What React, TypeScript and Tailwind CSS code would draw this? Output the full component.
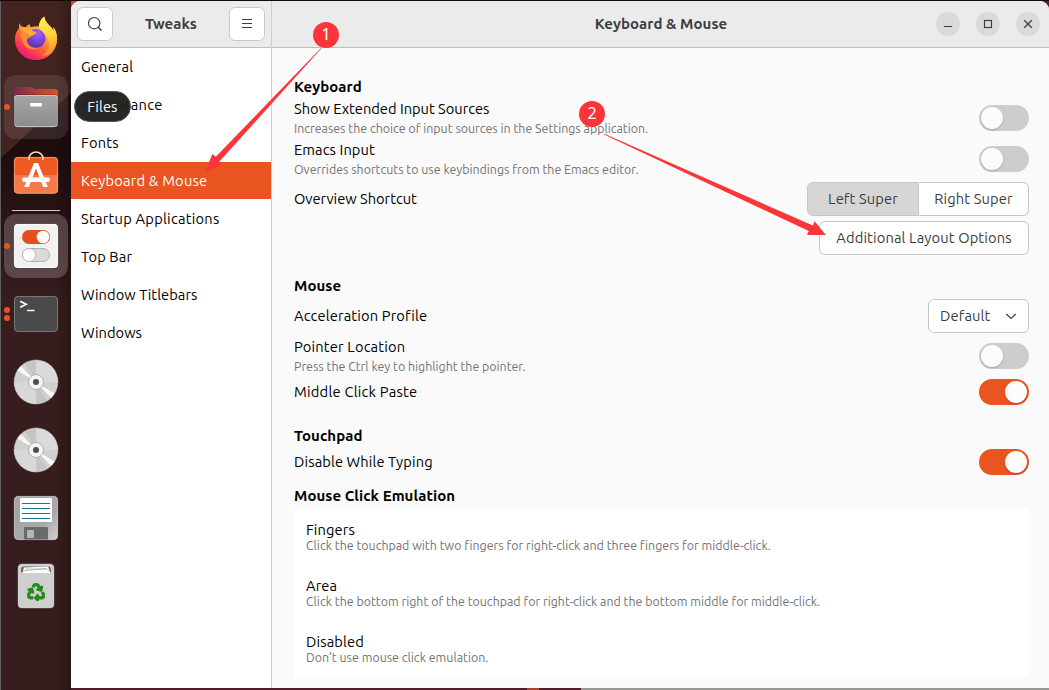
import type { ReactNode } from "react";
import { FaRecycle } from "react-icons/fa";

const TITLE = "text-[14.667px] leading-5 whitespace-nowrap";
const HINT = "text-[12.4px] leading-[18px] whitespace-nowrap text-[#747474]";

function FirefoxIcon() {
  return (
    <svg viewBox="0 0 64 64" className="size-16">
      <defs>
        <linearGradient id="fx-body" x1="0.85" y1="0.05" x2="0.25" y2="1">
          <stop offset="0" stopColor="#fff44f" />
          <stop offset="0.3" stopColor="#ffb932" />
          <stop offset="0.6" stopColor="#ff6a35" />
          <stop offset="0.85" stopColor="#fb2a62" />
          <stop offset="1" stopColor="#e3168c" />
        </linearGradient>
        <linearGradient id="fx-tail" x1="0.4" y1="0" x2="0.6" y2="1">
          <stop offset="0" stopColor="#fff34c" />
          <stop offset="0.5" stopColor="#ffd23c" />
          <stop offset="1" stopColor="#ff8a2b" />
        </linearGradient>
        <radialGradient id="fx-globe" cx="0.6" cy="0.25" r="0.8">
          <stop offset="0" stopColor="#a560ff" />
          <stop offset="0.5" stopColor="#7a45dc" />
          <stop offset="1" stopColor="#4f3298" />
        </radialGradient>
      </defs>
      <path d="M15.500 16c-.6 1.800-.6 3.300-.3 4.700C12 24.500 11 28.500 11 32.500 11.200 44.500 20.500 53 32 53s20.800-8.600 21-20.500c.1-5-1.200-9.500-3.700-12.600.4 1.600.6 3 .5 4.200-1.800-4.800-9-7.500-9.500-14.600-3.500 2.300-5.200 6.500-5.400 9.700-3.400.2-6 .3-8.200 1-.6-.9-1-1.800-1.100-3.200-1.700.8-2.800 1.900-3.600 3.200-1.500-.4-3-.6-4-.4-1-.9-2-2-2.500-3.800z" fill="url(#fx-body)" />
      <path d="M34.900 19.200c.2-3.500 2-7.300 5.400-9.700.5 7.100 8 10 9.500 14.600.1-1.200-.1-2.600-.5-4.200 3.600 4.800 4.700 11.500 2.500 18.300C49.500 45 44 49 38 48.500c6-3.500 8.300-9 6.600-15C42.900 27.500 37 25.500 34.900 19.200z" fill="url(#fx-tail)" />
      <circle cx="32" cy="31.500" r="9.400" fill="url(#fx-globe)" />
      <path d="M16.500 25c3-2.500 8.500-4 11-1.700 1.300 1.300 3 1.500 5 1.700-.3 2.600-4 3-5.300 4.600-1.500 2-4.500 1-4.200 4.400.4 5 6 7.500 10.500 6.800-4.500 3.500-12.500 1-14.500-5.500-1.500-4.500-2.500-7-2.500-10.300z" fill="#ff8a34" />
      <path d="M15.300 20.800c2.500-1 9.100-.8 12.100 2.400 1.300 1.300 3 1.600 5.100 1.800-.6 2.200-4 2.600-6 4.200-3-2.600-7-4.500-11.200-8.400z" fill="#ffae36" />
    </svg>
  );
}

function FilesIcon() {
  return (
    <svg viewBox="0 0 64 64" className="size-16">
      <defs>
        <linearGradient id="fl-back">
          <stop offset="0" stopColor="#7a2a50" />
          <stop offset="1" stopColor="#e2531f" />
        </linearGradient>
        <linearGradient id="fl-front" x2="0" y2="1">
          <stop offset="0" stopColor="#a6a6a6" />
          <stop offset="1" stopColor="#8c8c8c" />
        </linearGradient>
      </defs>
      <path d="M10 15.500a3.500 3.500 0 0 1 3.500-3.500h12.800c2 0 3 .8 4.200 2H50.500a3.500 3.500 0 0 1 3.500 3.500V30H10z" fill="url(#fl-back)" />
      <rect x="9.700" y="19.500" width="44.600" height="33" rx="3.800" fill="#3a1d1d" opacity=".5" />
      <rect x="10" y="20" width="44" height="32" rx="3.500" fill="url(#fl-front)" />
      <path d="M10.500 23.500a3 3 0 0 1 3-3h37a3 3 0 0 1 3 3" fill="none" stroke="#c9c9c9" strokeWidth="1" />
      <path d="M11 50q1 1.700 3 1.700h36q2 0 3-1.700" fill="none" stroke="#dcdcdc" strokeWidth=".8" />
      <rect x="26" y="28" width="12" height="3.400" rx="1" fill="#fff" />
    </svg>
  );
}

function SoftwareIcon() {
  return (
    <svg viewBox="0 0 64 64" className="size-16">
      <rect x="10" y="14" width="44" height="36.500" rx="4" fill="#f05a22" />
      <path d="M10 32h44v14.500a4 4 0 0 1-4 4H14a4 4 0 0 1-4-4z" fill="#f47a4b" />
      <rect x="10.400" y="14.400" width="43.200" height="35.700" rx="3.600" fill="none" stroke="#f8a07b" strokeWidth=".8" />
      <path d="M25 17v-1.500a7 6.500 0 0 1 14 0V17" fill="none" stroke="#f5d9b0" strokeWidth="1.600" />
      <path d="M30 20h4l9.800 24h-4.600L32 25.500 24.800 44h-4.600z" fill="#fff" />
      <rect x="18" y="34.600" width="28" height="4.400" rx="2.200" fill="#fff" />
    </svg>
  );
}

function TweaksIcon() {
  return (
    <svg viewBox="0 0 64 64" className="size-16">
      <rect x="9.700" y="9.700" width="44.600" height="45" rx="4.500" fill="#2a1818" opacity=".5" />
      <rect x="10" y="10" width="44" height="44" rx="4" fill="#f1f1f1" />
      <rect x="10.400" y="10.400" width="43.200" height="43.200" rx="3.600" fill="none" stroke="#fff" strokeWidth=".8" />
      <rect x="18" y="16" width="28" height="14" rx="7" fill="#e24f1c" />
      <circle cx="39" cy="23" r="6.300" fill="#fff" />
      <rect x="18.500" y="34.500" width="27" height="13" rx="6.500" fill="#dadada" stroke="#b2b2b2" />
      <circle cx="25" cy="41" r="6.500" fill="#fff" stroke="#b0b0b0" strokeWidth=".8" />
    </svg>
  );
}

function TerminalIcon() {
  return (
    <svg viewBox="0 0 64 64" className="size-16">
      <rect x="10" y="14" width="44" height="36" rx="4" fill="#4a4a4a" />
      <rect x="10.500" y="14.500" width="43" height="35" rx="3.500" fill="none" stroke="#777" />
      <path d="M16.200 19.300l6 3-6 3" fill="none" stroke="#fff" strokeWidth="1.700" />
      <path d="M23 28.500h7.500" stroke="#fff" strokeWidth="1.500" />
    </svg>
  );
}

function DiscIcon() {
  return (
    <svg viewBox="0 0 64 64" className="size-16">
      <circle cx="32" cy="32" r="22.400" fill="#8b8583" />
      <circle cx="32" cy="32" r="21.800" fill="#d0d0d0" />
      <path d="M32 32V10.200A21.800 21.800 0 0 1 53.800 32z" fill="#dadada" />
      <path d="M32 32L32 10.200A21.800 21.800 0 0 0 21 13.200zM32 32l0 21.800A21.800 21.800 0 0 0 43 50.800z" fill="#c5c5c5" />
      <path d="M32 32H10.200A21.800 21.800 0 0 0 32 53.800z" fill="#d8d8d8" />
      <path d="M32 32L13.500 20.500A21.800 21.800 0 0 1 17 16.200zM32 32l18.500 11.500a21.800 21.800 0 0 1-3.500 4.300z" fill="#faf8f6" />
      <circle cx="32" cy="32" r="7.500" fill="#f5f4f2" stroke="#b3aa93" strokeWidth=".9" />
      <circle cx="32" cy="32" r="3" fill="#4d4d4d" />
    </svg>
  );
}

function FloppyIcon() {
  return (
    <svg viewBox="0 0 64 64" className="size-16">
      <defs>
        <linearGradient id="fd" x2="1" y2="1">
          <stop offset="0" stopColor="#a2a2a2" />
          <stop offset=".65" stopColor="#a9a9a9" />
          <stop offset="1" stopColor="#d2d2d2" />
        </linearGradient>
      </defs>
      <rect x="10" y="10" width="44" height="44" rx="4.500" fill="url(#fd)" />
      <rect x="10.400" y="10.400" width="43.200" height="43.200" rx="4" fill="none" stroke="#bdbdbd" strokeWidth=".8" />
      <rect x="16" y="12" width="32" height="24" rx="1" fill="#fff" />
      <path d="M18 17.500h28M18 22.500h28M18 27.500h28M18 32.500h28" stroke="#1876a5" />
      <path d="M20 53.500V42a1 1 0 0 1 1-1h22a1 1 0 0 1 1 1v11.500z" fill="#6a6a6a" />
      <rect x="23" y="44" width="7" height="8" rx="1" fill="#b4b4b4" />
    </svg>
  );
}

function TrashIcon() {
  return (
    <svg viewBox="0 0 64 64" className="size-16">
      <rect x="13.600" y="9.600" width="36.800" height="45" rx="4.500" fill="#6f6a6a" />
      <rect x="14" y="10" width="36" height="44" rx="4" fill="#cfcfcf" />
      <path d="M17 18.500v-3a3 3 0 0 1 3-3h24a3 3 0 0 1 3 3v3z" fill="#6d6d6d" />
      <path d="M18.500 19l1.500-5.500 24-1 2.500 6.500z" fill="#fff" />
      <path d="M19 17l23-2.500 4 3M21 15h22" fill="none" stroke="#9a9a9a" strokeWidth=".6" />
      <FaRecycle x={23.200} y={29.300} size={17.800} color="#268a1d" strokeWidth={34} />
    </svg>
  );
}

function DockItem({ children, active = "", dots = 0 }: { children: ReactNode; active?: string; dots?: number }) {
  return (
    <div className={`relative size-16 shrink-0 rounded-[12px] ${active}`}>
      {children}
      <div className="absolute top-0 left-0 flex h-full flex-col justify-center gap-[2.500px]">
        {Array.from({ length: dots }, (_, i) => (
          <span key={i} className="size-[6px] rounded-full bg-[#e9541f]" />
        ))}
      </div>
    </div>
  );
}

function Dock() {
  return (
    <nav className="relative flex h-full w-[71px] shrink-0 flex-col items-center gap-1 border-l border-[#606060] bg-[#371d1e] pt-[6px]">
      <svg className="absolute inset-0 h-full w-full" viewBox="0 0 70 689" preserveAspectRatio="none">
        <defs>
          <linearGradient id="dk-top" x2="0" y2="1">
            <stop offset="0" stopColor="#452420" />
            <stop offset="1" stopColor="#41231f" />
          </linearGradient>
          <linearGradient id="dk-mid" x2="0" y2="1">
            <stop offset="0" stopColor="#281112" />
            <stop offset=".3" stopColor="#1e0c0e" />
            <stop offset="1" stopColor="#371d1e" />
          </linearGradient>
          <linearGradient id="dk-edge">
            <stop offset=".75" stopColor="#000" stopOpacity="0" />
            <stop offset="1" stopColor="#000" stopOpacity=".22" />
          </linearGradient>
        </defs>
        <rect y="80" width="70" height="220" fill="url(#dk-mid)" />
        <path d="M0 0h70v92L0 157z" fill="url(#dk-top)" />
        <rect width="70" height="689" fill="url(#dk-edge)" />
      </svg>
      <DockItem><FirefoxIcon /></DockItem>
      <DockItem active="bg-white/10" dots={1}><FilesIcon /></DockItem>
      <DockItem><SoftwareIcon /></DockItem>
      <div className="relative -my-px h-px w-12 shrink-0 bg-[#d0caca]" />
      <DockItem active="bg-white/20" dots={1}><TweaksIcon /></DockItem>
      <DockItem dots={2}><TerminalIcon /></DockItem>
      <DockItem><DiscIcon /></DockItem>
      <DockItem><DiscIcon /></DockItem>
      <DockItem><FloppyIcon /></DockItem>
      <DockItem><TrashIcon /></DockItem>
    </nav>
  );
}

function WindowButton({ children }: { children: ReactNode }) {
  return (
    <button className="grid size-6 place-items-center rounded-full bg-[#dadada]">
      <svg viewBox="0 0 24 24" className="size-6" fill="none" stroke="#3d3d3d">{children}</svg>
    </button>
  );
}

function Switch({ on = false }: { on?: boolean }) {
  return (
    <span className={`flex h-[26px] w-[50px] shrink-0 items-center rounded-full p-[2px] ${on ? "justify-end bg-[#e95420]" : "bg-[#cdcdcd]"}`}>
      <span className="size-[22px] rounded-full bg-[#fcfcfc] shadow-[0_1px_2px_rgba(0,0,0,0.2)]" />
    </span>
  );
}

function Heading({ children, className }: { children: ReactNode; className: string }) {
  return <h2 className={`h-5 text-[15px] leading-5 font-bold tracking-[0.05px] whitespace-nowrap ${className}`}>{children}</h2>;
}

function Row({ title, hint, className, children, titleClass = "tracking-[0.15px]" }: { title: string; hint?: string; className: string; children: ReactNode; titleClass?: string }) {
  return (
    <div className={`flex items-center justify-between ${className}`}>
      <div>
        <div className={`${TITLE} ${titleClass}`}>{title}</div>
        {hint && <div className={HINT}>{hint}</div>}
      </div>
      {children}
    </div>
  );
}

const BUTTON = "flex h-[34px] items-center border border-[#c6c6c6] text-[14.667px] tracking-[0.14px] whitespace-nowrap text-[#3d3d3d]";

const PAGES = [
  { name: "General", spacing: "tracking-[0.15px]" },
  { name: "Appearance", spacing: "tracking-[0.3px]" },
  { name: "Fonts", spacing: "tracking-[0.2px]" },
  { name: "Keyboard & Mouse", spacing: "tracking-[0.2px]" },
  { name: "Startup Applications", spacing: "tracking-[0.25px]" },
  { name: "Top Bar", spacing: "tracking-[0.1px]" },
  { name: "Window Titlebars", spacing: "tracking-[0.07px]" },
  { name: "Windows", spacing: "tracking-[0.05px]" },
];

const EMULATION = [
  ["Fingers", "Click the touchpad with two fingers for right-click and three fingers for middle-click."],
  ["Area", "Click the bottom right of the touchpad for right-click and the bottom middle for middle-click."],
  ["Disabled", "Don’t use mouse click emulation."],
];

function Sidebar() {
  return (
    <aside className="flex w-[201px] shrink-0 flex-col border-r border-[#cfcfcf] bg-white">
      <div className="flex h-[47px] shrink-0 items-center justify-between border-b border-[#bfbfbf] bg-[#ebebeb] pr-[6px] pl-[6px]">
        <button className="grid h-[34px] w-9 place-items-center rounded-md border border-[#c8c8c8] bg-white">
          <svg viewBox="0 0 16 16" className="size-4" fill="none" stroke="#3d3d3d" strokeWidth="1.100">
            <circle cx="7.200" cy="7.200" r="5.700" />
            <path d="M11.300 11.300l3.200 3.200" strokeWidth="1.500" />
          </svg>
        </button>
        <span className="text-[15px] font-bold text-[#3d3d3d]">Tweaks</span>
        <button className="grid h-[34px] w-9 place-items-center rounded-md border border-[#c8c8c8] bg-white">
          <svg viewBox="0 0 16 16" className="size-4" stroke="#3d3d3d">
            <path d="M3 3.500h10M3 7.500h10M3 11.500h10" />
          </svg>
        </button>
      </div>
      <ul className="flex flex-col">
        {PAGES.map(({ name, spacing }) => (
          <li key={name} className="h-[38px]">
            <div className={`flex h-[37px] items-center pl-[10px] ${TITLE} ${spacing} ${name === "Keyboard & Mouse" ? "bg-[#e95420] text-white" : ""}`}>{name}</div>
          </li>
        ))}
      </ul>
    </aside>
  );
}

function Settings() {
  return (
    <main className="flex min-w-0 flex-1 flex-col bg-[#fafafa]">
      <header className="flex h-[47px] shrink-0 items-center border-b border-[#bfbfbf] bg-[#ebebeb] pr-[9px]">
        <span className="w-[114px]" />
        <h1 className="flex-1 text-center text-[15px] font-bold tracking-[0.05px] text-[#3d3d3d]">Keyboard &amp; Mouse</h1>
        <div className="flex w-[104px] gap-4">
          <WindowButton><path d="M8 14.500h8" /></WindowButton>
          <WindowButton><rect x="8.500" y="8.500" width="7" height="7" strokeWidth="1.200" /></WindowButton>
          <WindowButton><path d="M8.200 8.200l7.600 7.600M15.800 8.200l-7.600 7.600" strokeWidth="1.300" /></WindowButton>
        </div>
      </header>
      <div className="flex flex-col pr-5 pl-[22px]">
        <Heading className="mt-[29px]">Keyboard</Heading>
        <Row className="mt-px h-10" titleClass="tracking-normal" title="Show Extended Input Sources" hint="Increases the choice of input sources in the Settings application."><Switch /></Row>
        <Row className="mt-px h-10" titleClass="tracking-[0.1px]" title="Emacs Input" hint="Overrides shortcuts to use keybindings from the Emacs editor."><Switch /></Row>
        <Row className="mt-[3px] h-[34px]" titleClass="tracking-normal" title="Overview Shortcut">
          <div className="flex">
            <button className={`${BUTTON} w-[112px] justify-center rounded-l-md bg-[#d6d6d6]`}>Left Super</button>
            <button className={`${BUTTON} w-[110px] justify-center rounded-r-md border-l-0 bg-white`}>Right Super</button>
          </div>
        </Row>
        <button className={`${BUTTON} mt-[5px] w-[210px] justify-center self-end rounded-md bg-white`}>Additional Layout Options</button>

        <Heading className="mt-[21px]">Mouse</Heading>
        <Row className="mt-[3px] h-[34px]" title="Acceleration Profile">
          <button className={`${BUTTON} w-[101px] justify-between rounded-md bg-white pr-[11px] pl-[11px]`}>
            Default
            <svg viewBox="0 0 12 12" className="size-3" fill="none" stroke="#3d3d3d" strokeWidth="1.200">
              <path d="M1.300 4L6 8.500 10.700 4" />
            </svg>
          </button>
        </Row>
        <Row className="mt-[3px] h-10" titleClass="tracking-[0.18px]" title="Pointer Location" hint="Press the Ctrl key to highlight the pointer."><Switch /></Row>
        <Row className="mt-[3px] h-[26px]" titleClass="tracking-[0.24px]" title="Middle Click Paste"><Switch on /></Row>

        <Heading className="mt-[21px]">Touchpad</Heading>
        <Row className="mt-[3px] h-[26px]" titleClass="tracking-[0.12px]" title="Disable While Typing"><Switch on /></Row>

        <Heading className="mt-[11px]">Mouse Click Emulation</Heading>
        <ul className="mt-[3px] bg-white">
          {EMULATION.map(([title, hint]) => (
            <li key={title} className="h-14 pt-[11px] pl-3">
              <div className={`${TITLE} tracking-[0.12px]`}>{title}</div>
              <div className={`${HINT} -mt-[4px] tracking-[0.01px]`}>{hint}</div>
            </li>
          ))}
        </ul>
      </div>
    </main>
  );
}

const BADGE = "absolute grid size-[26px] place-items-center rounded-full bg-[#fb3538] pb-[2px] font-['Noto_Sans',sans-serif] text-[16px] leading-none text-white";

function Annotations() {
  return (
    <>
      <svg className="pointer-events-none absolute inset-0 h-[690px] w-[1049px]" viewBox="0 0 1049 690" fill="#fb3538">
        <path d="M321.500 48.300L321 48 215.800 156.800 212.300 154 205 172.200 222.300 164.800 219.200 161.800z" />
        <path d="M604 134.600L604.300 133.800 812.800 225.600 814.700 221.200 825.800 234.900 807 234.900 808.800 231z" />
      </svg>
      <span className={`${BADGE} top-[22px] left-[313px]`}>1</span>
      <span className={`${BADGE} top-[101px] left-[579px]`}>2</span>
    </>
  );
}

export default function App() {
  return (
    <div className="relative flex h-[690px] w-[1049px] overflow-hidden border-t border-[#15090c] bg-[#591c30] font-['Ubuntu','Noto_Sans',sans-serif] text-black">
      <Dock />
      <div className="flex min-w-0 flex-1 flex-col bg-[linear-gradient(90deg,#c9492f_0,#c9492f_10px,#591c30_10px)]">
        <div className="flex h-[687px] overflow-hidden rounded-t-[9px]">
          <Sidebar />
          <Settings />
        </div>
        <div className="flex h-[2px] bg-[#511d2a]">
          <span className="ml-[456px] h-full w-3 bg-[#a8432d]" />
          <span className="ml-auto h-full w-[468px] bg-[#969993]" />
        </div>
      </div>
      <span className="absolute top-[90px] left-[74px] flex h-[31px] w-[57px] items-center justify-center rounded-full border border-[#555] bg-[#202020]/97 text-[14.667px] tracking-[0.14px] text-white">Files</span>
      <div className="absolute -top-px left-0"><Annotations /></div>
    </div>
  );
}
